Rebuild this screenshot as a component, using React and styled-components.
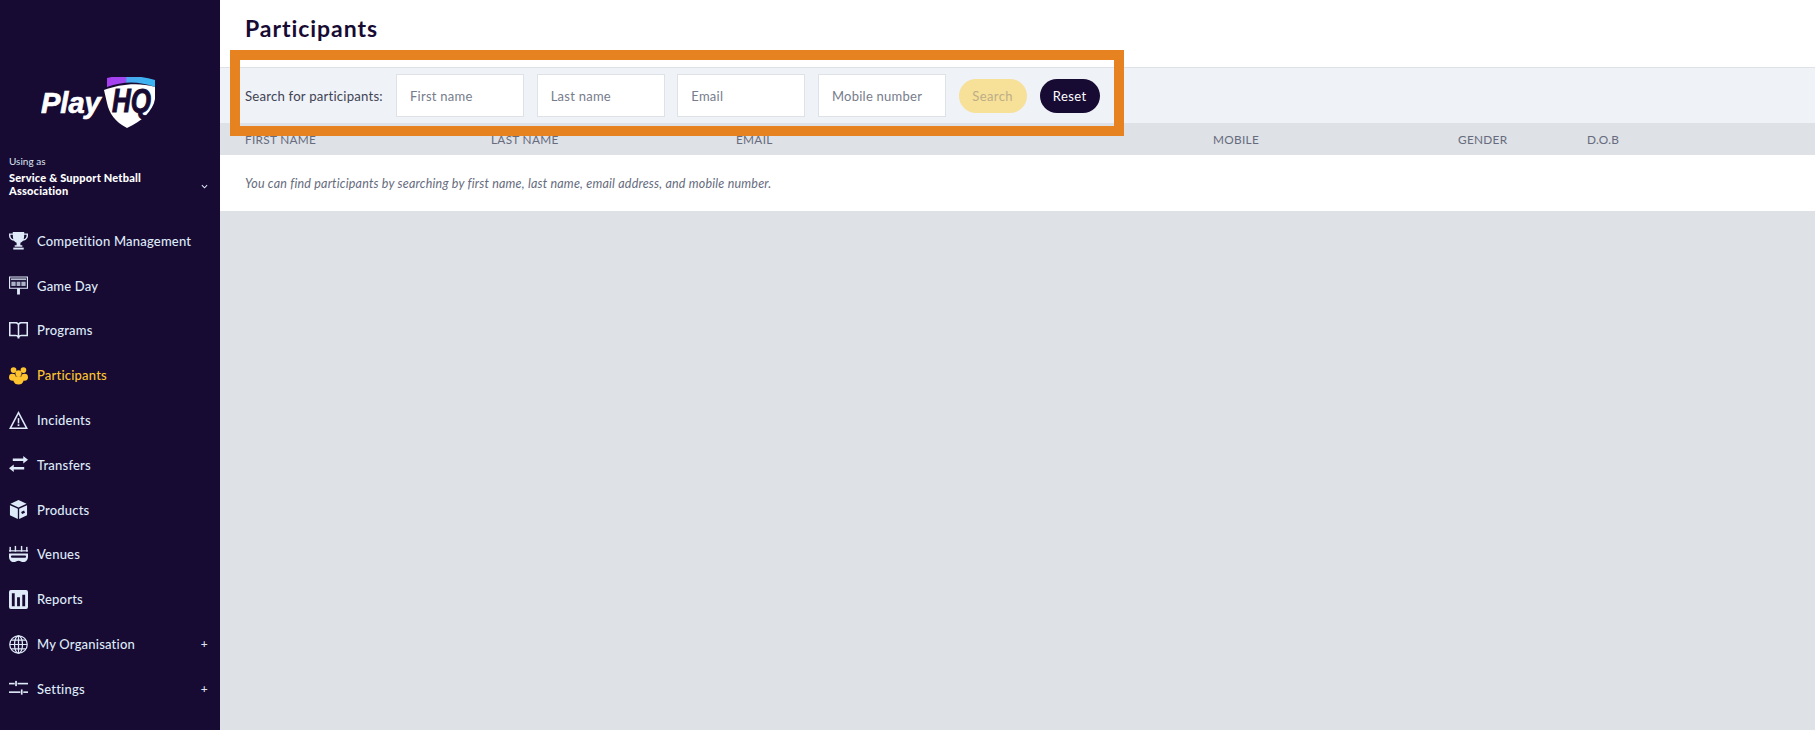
import React from "react"
import styled, { createGlobalStyle } from "styled-components"

const GlobalStyle = createGlobalStyle`
  html, body {
    margin: 0;
    height: 100%;
    background: #dee1e6;
    font-family: "Lato", "Noto Sans", sans-serif;
  }
  #root { height: 100%; }
  * { box-sizing: border-box; }
`

const Page = styled.div`
  position: relative;
  display: flex;
  height: 730px;
  overflow: hidden;
`

const Sidebar = styled.aside`
  width: 220px;
  flex: none;
  background: #170b33;
  color: #e6eef9;
  padding-top: 77px;
`

const LogoLink = styled.a`
  display: block;
  width: 116px;
  height: 52px;
  margin-left: 41px;
`

const UsingAs = styled.div`
  display: flex;
  align-items: flex-end;
  justify-content: space-between;
  margin-top: 26px;
  padding: 0 12px 0 9px;
`

const UsingLabel = styled.div`
  font-size: 10px;
  line-height: 12px;
  color: #dbe5f2;
  margin-bottom: 4px;
`

const OrgName = styled.div`
  width: 150px;
  font-size: 11px;
  font-weight: 900;
  line-height: 13px;
  letter-spacing: 0.2px;
  color: #fff;
`

const Chevron = styled.svg`
  margin-bottom: 8px;
`

const NavList = styled.nav`
  margin-top: 21.5px;
`

const NavRow = styled.a`
  display: flex;
  align-items: center;
  height: 44.8px;
  padding: 0 12px 0 9px;
  color: ${(p) => (p.$active ? "#fdc42f" : "#dfeaf8")};
  font-size: 13px;
  font-weight: 500;
  letter-spacing: 0.2px;
`

const NavIcon = styled.svg`
  width: 19px;
  height: 19px;
  flex: none;
  margin-right: 9px;
  fill: currentColor;
`

const GlobeIcon = styled(NavIcon)`
  fill: none;
  stroke: currentColor;
  stroke-width: 1.3;
`

const NavText = styled.span`
  flex: 1;
`

const Plus = styled.span`
  font-size: 12px;
  line-height: 12px;
  color: #dbe5f2;
`

const Main = styled.main`
  flex: 1;
  display: flex;
  flex-direction: column;
  min-width: 0;
`

const Header = styled.header`
  height: 68px;
  background: #fff;
  border-bottom: 1px solid #dee1e6;
  padding: 13px 25px 0;
`

const Title = styled.h1`
  margin: 0;
  font-size: 23px;
  font-weight: 700;
  line-height: 30px;
  letter-spacing: 0.95px;
  color: #170b33;
`

const SearchBar = styled.form`
  display: flex;
  align-items: center;
  height: 55px;
  padding-left: 25px;
  background: #eff2f7;
`

const SearchLabel = styled.label`
  width: 151px;
  font-size: 13.2px;
  letter-spacing: 0.2px;
  color: #3f4454;
`

const Field = styled.input`
  width: 128px;
  height: 43px;
  margin-right: 12.67px;
  padding: 0 13px;
  background: #fff;
  border: 1px solid #dee1e6;
  border-radius: 0;
  font-family: inherit;
  font-size: 13px;
  letter-spacing: 0.25px;
  &::placeholder {
    color: #777c8c;
    opacity: 1;
  }
`

const Pill = styled.button`
  width: ${(p) => p.$width}px;
  height: 34px;
  margin-right: 13px;
  padding: 0;
  border: 0;
  border-radius: 17px;
  background: ${(p) => (p.$muted ? "#f7e098" : "#170b33")};
  color: ${(p) => (p.$muted ? "#bcae87" : "#fff")};
  font-family: inherit;
  font-size: 13px;
  font-weight: 400;
  letter-spacing: 0.4px;
`

const TableHead = styled.div`
  display: grid;
  grid-template-columns: 246px 245px 477px 245px 129px 1fr;
  align-items: center;
  height: 32px;
  padding-left: 25px;
  background: #dee1e6;
  font-size: 11.8px;
  letter-spacing: 0.3px;
  color: #666b7d;
`

const EmptyRow = styled.div`
  display: flex;
  align-items: center;
  height: 56px;
  padding-left: 25px;
  background: #fff;
  font-size: 12.5px;
  font-style: italic;
  letter-spacing: 0.2px;
  color: #666b7d;
`

const Highlight = styled.div`
  position: absolute;
  left: 230px;
  top: 50px;
  width: 894px;
  height: 86px;
  border: 10px solid #e78220;
  pointer-events: none;
`

const Logo = () => (
  <svg viewBox="0 0 116 52" width="116" height="52">
    <defs>
      <linearGradient id="band" x1="0" x2="1" y1="0" y2="0">
        <stop offset="0" stopColor="#a83df0" />
        <stop offset="0.38" stopColor="#a048f0" />
        <stop offset="0.42" stopColor="#4aa8ee" />
        <stop offset="1" stopColor="#38b6f2" />
      </linearGradient>
    </defs>
    <path d="M66 1 C82 -3 100 -1 114 3 L114 10 C98 4 82 4 66 10 Z" fill="url(#band)" />
    <path d="M63 13 C78 7 98 5 114 10 L114 22 C112 34 101 44 86 51 C74 45 68 36 66 26 Z" fill="#fff" />
    <text x="0" y="36" fontFamily="Liberation Sans" fontWeight="700" fontStyle="italic" fontSize="29" fill="#fff" stroke="#fff" strokeWidth="0.7">Play</text>
    <text transform="translate(71 35) scale(1 1.25)" fontFamily="Liberation Sans" fontWeight="700" fontStyle="italic" fontSize="26" fill="#170b33" stroke="#170b33" strokeWidth="0.8">HQ</text>
  </svg>
)

const Trophy = () => (
  <NavIcon viewBox="0 0 20 20">
    <path d="M4 1h12v1.500h4v2.200c0 3-2.300 5.200-5.200 5.600-.8 1.100-1.800 1.800-2.800 2.100V15h2v1.500H6V15h2v-2.600c-1-.3-2-1-2.800-2.100C2.300 9.900 0 7.700 0 4.700V2.500h4zM1.500 4v.8c0 2 1.300 3.400 3 3.900C4.200 7.500 4 5.800 4 4zm17 0H16c0 1.800-.2 3.500-.5 4.700 1.700-.5 3-1.900 3-3.900z" fillRule="evenodd" />
    <rect x="4.500" y="17.500" width="11" height="2" />
  </NavIcon>
)

const Scoreboard = () => (
  <NavIcon viewBox="0 0 20 20">
    <path d="M0 0.500h20v13H0zM1.200 1.700v10.600h17.600V1.700z" fillRule="evenodd" />
    <rect x="2" y="2.500" width="16" height="1.800" opacity="0.8" />
    <rect x="2.500" y="6" width="4.500" height="4.500" opacity="0.75" />
    <rect x="8" y="6" width="4" height="4.500" opacity="0.75" />
    <rect x="13" y="6" width="4.500" height="4.500" opacity="0.75" />
    <rect x="8.500" y="13" width="3" height="6.500" />
  </NavIcon>
)

const Book = () => (
  <NavIcon viewBox="0 0 20 20">
    <path d="M0 1h7c1.300 0 2.400.5 3 1.400C10.600 1.500 11.700 1 13 1h7v15h-7c-1 0-1.500.4-2 1.200v1.300H9v-1.300C8.500 16.400 8 16 7 16H0zM1.600 2.600v11.800H7c.8 0 1.500.2 2.200.6V4.700c0-1.200-1-2.100-2.200-2.100zm16.800 0H13c-1.200 0-2.200.9-2.200 2.100V15c.7-.4 1.400-.6 2.200-.6h5.400z" fillRule="evenodd" />
  </NavIcon>
)

const People = () => (
  <NavIcon viewBox="0 0 20 20">
    <circle cx="4.800" cy="4.300" r="3" />
    <circle cx="15.200" cy="4.300" r="3" />
    <circle cx="10" cy="7.800" r="3.200" />
    <ellipse cx="3.600" cy="11.800" rx="3.600" ry="3.600" />
    <ellipse cx="16.400" cy="11.800" rx="3.600" ry="3.600" />
    <ellipse cx="10" cy="15" rx="5.300" ry="4.600" />
  </NavIcon>
)

const Warning = () => (
  <NavIcon viewBox="0 0 20 20">
    <path d="M10 0 20 19H0zM10 3.400 2.700 17.400h14.600z" fillRule="evenodd" />
    <rect x="9.200" y="7.500" width="1.600" height="5.500" />
    <rect x="9.100" y="14" width="1.800" height="1.800" />
  </NavIcon>
)

const Arrows = () => (
  <NavIcon viewBox="0 0 20 20">
    <path d="M20 5 15 1v2.700H4v2.600h11V9zM0 14l5 4v-2.700h11v-2.600H5V10z" />
  </NavIcon>
)

const BoxIcon = () => (
  <NavIcon viewBox="0 0 20 20">
    <path d="M10 0 18.500 4 10 8 1.500 4zM1 5.400l8.300 3.900V20L1 16zM19 5.400V16l-8.300 4V9.300z" />
    <rect x="13" y="12" width="3.500" height="2.500" fill="#170b33" transform="rotate(-25 14 13)" />
  </NavIcon>
)

const Stadium = () => (
  <NavIcon viewBox="0 0 20 20">
    <path d="M0 9h20v3c0 3.500-2 6-5 6-1.800 0-3-1.500-5-1.500S6.800 18 5 18c-3 0-5-2.500-5-6z" />
    <rect x="2" y="11" width="16" height="2.500" rx="1.200" fill="#170b33" />
    <rect x="0.500" y="2" width="1.500" height="5" />
    <rect x="6" y="1" width="1.500" height="6" />
    <rect x="12.500" y="1" width="1.500" height="6" />
    <rect x="18" y="2" width="1.500" height="5" />
    <rect x="0" y="5.500" width="20" height="1.300" />
  </NavIcon>
)

const Bars = () => (
  <NavIcon viewBox="0 0 20 20">
    <path d="M2 0h16a2 2 0 0 1 2 2v16a2 2 0 0 1-2 2H2a2 2 0 0 1-2-2V2a2 2 0 0 1 2-2zM3 3.500V17h3V3.500zM8.500 7.500V17h3V7.500zM14 5v12h3V5z" fillRule="evenodd" />
  </NavIcon>
)

const Globe = () => (
  <GlobeIcon viewBox="0 0 20 20">
    <circle cx="10" cy="10" r="9.200" />
    <ellipse cx="10" cy="10" rx="4.200" ry="9.200" />
    <path d="M10 1v18M1 10h18M2.200 5.500h15.600M2.200 14.500h15.600" />
  </GlobeIcon>
)

const Sliders = () => (
  <NavIcon viewBox="0 0 20 20">
    <rect x="0" y="4" width="6" height="1.700" />
    <rect x="6.500" y="2" width="1.800" height="5.500" />
    <rect x="9" y="4" width="11" height="1.700" />
    <rect x="0" y="13" width="12" height="1.700" />
    <rect x="12.500" y="11" width="1.800" height="5.500" />
    <rect x="15" y="13" width="5" height="1.700" />
  </NavIcon>
)

const navItems = [
  { label: "Competition Management", Icon: Trophy },
  { label: "Game Day", Icon: Scoreboard },
  { label: "Programs", Icon: Book },
  { label: "Participants", Icon: People, active: true },
  { label: "Incidents", Icon: Warning },
  { label: "Transfers", Icon: Arrows },
  { label: "Products", Icon: BoxIcon },
  { label: "Venues", Icon: Stadium },
  { label: "Reports", Icon: Bars },
  { label: "My Organisation", Icon: Globe, more: true },
  { label: "Settings", Icon: Sliders, more: true },
]

const columns = ["FIRST NAME", "LAST NAME", "EMAIL", "MOBILE", "GENDER", "D.O.B"]
const fields = ["First name", "Last name", "Email", "Mobile number"]

const App = () => {
  return (
    <Page>
      <GlobalStyle />
      <Sidebar>
        <LogoLink aria-label="PlayHQ">
          <Logo />
        </LogoLink>
        <UsingAs>
          <div>
            <UsingLabel>Using as</UsingLabel>
            <OrgName>Service &amp; Support Netball Association</OrgName>
          </div>
          <Chevron viewBox="0 0 8 5" width="7" height="5" fill="none" stroke="#dbe5f2" strokeWidth="1.200">
            <path d="M1 1l3 3 3-3" />
          </Chevron>
        </UsingAs>
        <NavList>
          {navItems.map(({ label, Icon, active, more }) => (
            <NavRow key={label} $active={active}>
              <Icon />
              <NavText>{label}</NavText>
              {more && <Plus>+</Plus>}
            </NavRow>
          ))}
        </NavList>
      </Sidebar>
      <Main>
        <Header>
          <Title>Participants</Title>
        </Header>
        <SearchBar>
          <SearchLabel>Search for participants:</SearchLabel>
          {fields.map((name) => (
            <Field key={name} placeholder={name} />
          ))}
          <Pill type="button" $width={68} $muted>Search</Pill>
          <Pill type="button" $width={60}>Reset</Pill>
        </SearchBar>
        <TableHead>
          {columns.map((name) => (
            <span key={name}>{name}</span>
          ))}
        </TableHead>
        <EmptyRow>You can find participants by searching by first name, last name, email address, and mobile number.</EmptyRow>
      </Main>
      <Highlight />
    </Page>
  )
}

export default App
